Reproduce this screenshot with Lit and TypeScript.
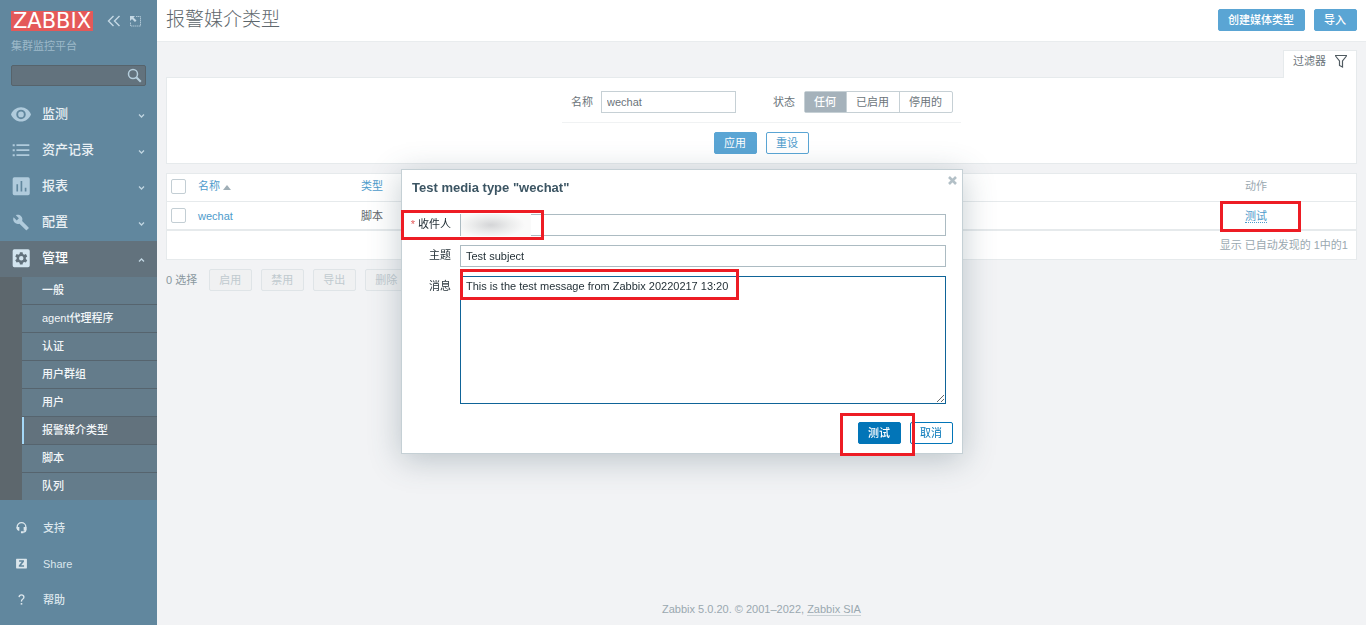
import { LitElement, html, css, svg } from "lit";
import { customElement, state } from "lit/decorators.js";
import { classMap } from "lit/directives/class-map.js";

const icons = {
  eye: svg`<path fill-rule="evenodd" d="M12 4C6.500 4 2 7.500 0 12.500 2 17.500 6.500 21 12 21s10-3.500 12-8.500C22 7.500 17.500 4 12 4zm0 14.200a5.700 5.700 0 1 1 0-11.400 5.700 5.700 0 0 1 0 11.400zm0-2.300a3.400 3.400 0 1 0 0-6.800 3.400 3.400 0 0 0 0 6.800z"/>`,
  list: svg`<path d="M2 5h2.500v2.500H2zM2 11h2.500v2.500H2zM2 17h2.500v2.500H2zM6.500 5H22v2.300H6.500zM6.500 11H22v2.300H6.500zM6.500 17H22v2.300H6.500z"/>`,
  chart: svg`<path fill-rule="evenodd" d="M4 1.500h16.500a2 2 0 0 1 2 2V21a2 2 0 0 1-2 2H4a2 2 0 0 1-2-2V3.500a2 2 0 0 1 2-2zM6.500 10v8.500h2V10zm5-4v12.500h2V6zm5 8v4.500h2V14z"/>`,
  wrench: svg`<path d="M22.700 19l-9.100-9.100c.9-2.300.4-5-1.500-6.900-2-2-5-2.400-7.400-1.300L9 6 6 9 1.600 4.700C.4 7.100.9 10.100 2.900 12.100c1.900 1.900 4.600 2.400 6.900 1.500l9.100 9.100c.4.4 1 .4 1.400 0l2.300-2.300c.5-.4.5-1.100.1-1.400z"/>`,
  gear: svg`<path fill-rule="evenodd" d="M4 1.500h16.500a2 2 0 0 1 2 2V21a2 2 0 0 1-2 2H4a2 2 0 0 1-2-2V3.500a2 2 0 0 1 2-2zm6.700 3.500-.4 2.200-1.500.9-2.100-.8-1.600 2.800 1.700 1.400v1.800l-1.700 1.400 1.600 2.800 2.100-.8 1.500.9.4 2.200h3.200l.4-2.200 1.500-.9 2.100.8 1.600-2.800-1.700-1.400v-1.800l1.700-1.400-1.600-2.800-2.100.8-1.500-.9-.4-2.200zM12.300 9.700a2.700 2.700 0 1 1 0 5.400 2.700 2.700 0 0 1 0-5.400z"/>`,
  support: svg`<path fill="none" stroke="currentColor" stroke-width="2.400" d="M4 14V11a8 8 0 0 1 16 0v5q0 4-5 4.500"/><path d="M3 11h5v7H6q-3-1-3-4zM16 11h5v5q-1 2-3 2h-2zM11 19h4.500v3.500H11z"/>`,
  share: svg`<path fill-rule="evenodd" d="M3 3h18q1 0 1 1v16q0 1-1 1H3q-1 0-1-1V4q0-1 1-1zM7.500 6v2.600h5L7 15.500V18h9.700v-2.600h-5.500L16.500 8.700V6z"/>`,
  help: svg`<path fill="none" stroke="currentColor" stroke-width="2.500" d="M7.500 7.500Q8 3.500 12 3.500T16.500 7.500Q16.500 10 14 11.500T12 16"/><path d="M10.500 18.500h3v3h-3z"/>`,
};

type IconName = keyof typeof icons;
const icon = (name: IconName, size: number) =>
  html`<svg class="icon" width=${size} height=${size} viewBox="0 0 24 24" fill="currentColor" aria-hidden="true">${icons[name]}</svg>`;

const base = css`
  *, *::before, *::after { box-sizing: border-box; }
  a { color: inherit; text-decoration: none; }
  button, input, textarea { font: inherit; margin: 0; }
  svg { display: block; flex: none; }
  .btn {
    height: 22px;
    padding: 0 10px 0 9px;
    border: 1px solid #5aa5d4;
    border-radius: 2px;
    background: #5aa5d4;
    color: #fff;
    line-height: 20px;
    white-space: nowrap;
    cursor: pointer;
  }
  .btn.alt { background: #fff; color: #4d9bcb; }
  .mark { position: absolute; border: 3px solid #ed1c24; pointer-events: none; }
`;

@customElement("side-nav")
export class SideNav extends LitElement {
  static styles = [base, css`
    :host {
      display: flex;
      flex-direction: column;
      width: 157px;
      flex: none;
      min-height: 100vh;
      background: #61879e;
      color: #e9f0f4;
    }
    .head { padding: 11px 11px 0; }
    .brand { display: flex; align-items: center; height: 20px; color: #c4d8e4; }
    .logo {
      background: #e45959;
      color: #fff;
      width: 82px;
      height: 20px;
      font: 21px/20px "DejaVu Sans", sans-serif;
      text-align: center;
    }
    .tool { padding: 0; border: 0; background: none; color: inherit; cursor: pointer; margin-left: 14px; }
    .tool + .tool { margin-left: 8px; }
    .server { margin-top: 7px; line-height: 16px; color: #9db9c9; }
    .search { display: flex; position: relative; margin-top: 11px; }
    .search input {
      width: 100%;
      height: 21px;
      border: 1px solid #56636b;
      border-radius: 2px;
      background: #62727d;
      color: #fff;
      padding: 0 24px 0 5px;
    }
    .search button {
      position: absolute;
      right: 4px;
      top: 3px;
      padding: 0;
      border: 0;
      background: none;
      color: #b5cedc;
    }
    ul { list-style: none; margin: 0; padding: 0; }
    .menu { margin-top: 11px; }
    .top {
      display: flex;
      align-items: center;
      height: 36px;
      padding: 0 11px 2px;
      font-size: 13px;
      font-weight: 500;
    }
    .top .icon { color: #b0cbdc; width: 20px; margin-right: 11px; }
    .top .label { flex: 1; line-height: 20px; }
    .top .chev { color: #c0d5e1; margin-top: 4px; }
    .top.open { background: #62727d; color: #fff; }
    .top.open .icon { color: #d3e5f0; }
    .sub { background: #5d676d; padding-left: 22px; }
    .sub a {
      display: block;
      height: 27px;
      padding-left: 20px;
      line-height: 27px;
      background: #647c8b;
      font-weight: 500;
      color: #f2f6f8;
    }
    .sub li + li { border-top: 1px solid #56646e; }
    .sub a.current { background: #62727d; border-left: 2px solid #a5d8f7; padding-left: 18px; }
    .foot { margin-top: auto; padding-bottom: 7px; }
    .foot a { display: flex; align-items: center; height: 36px; padding-left: 15px; color: #dbe6ec; font-weight: 500; }
    .foot .icon { margin: 0 15px 2px 0; }
  `];

  private sections: { name: string; icon: IconName; open?: boolean }[] = [
    { name: "监测", icon: "eye" },
    { name: "资产记录", icon: "list" },
    { name: "报表", icon: "chart" },
    { name: "配置", icon: "wrench" },
    { name: "管理", icon: "gear", open: true },
  ];
  private pages = ["一般", "agent代理程序", "认证", "用户群组", "用户", "报警媒介类型", "脚本", "队列"];
  private links: { name: string; icon: IconName }[] = [
    { name: "支持", icon: "support" },
    { name: "Share", icon: "share" },
    { name: "帮助", icon: "help" },
  ];

  private iconSize(name: IconName) {
    return name === "wrench" ? 17 : 20;
  }

  render() {
    return html`
      <div class="head">
        <div class="brand">
          <a class="logo" href="#">ZABBIX</a>
          <button class="tool" aria-label="收起侧栏">
            <svg width="14" height="14" viewBox="0 0 14 14" fill="none" stroke="currentColor" stroke-width="1.400"><path d="M6.500 2 1.500 7l5 5M12.500 2l-5 5 5 5"/></svg>
          </button>
          <button class="tool" aria-label="全屏">
            <svg width="13" height="13" viewBox="0 0 13 13" fill="none" stroke="currentColor"><path stroke-dasharray="1.500 0.500" stroke-opacity=".75" d="M7 1.500h4.500v9.500H1.500V7"/><path d="M1 1h5L4.500 2.500l3 3L6 7 3 4 1 6z" fill="currentColor" stroke="none"/></svg>
          </button>
        </div>
        <div class="server">集群监控平台</div>
        <form class="search" role="search">
          <input type="text" aria-label="搜索" />
          <button type="button" aria-label="搜索">
            <svg width="15" height="15" viewBox="0 0 15 15" fill="none" stroke="currentColor"><circle cx="6" cy="6" r="4.500" stroke-width="1.500"/><path d="m9.300 9.300 4.500 4.500" stroke-width="2"/></svg>
          </button>
        </form>
      </div>
      <nav>
        <ul class="menu">
          ${this.sections.map((s) => html`
            <li>
              <a href="#" class=${classMap({ top: true, open: !!s.open })}>
                ${icon(s.icon, this.iconSize(s.icon))}
                <span class="label">${s.name}</span>
                <svg class="chev" width="9" height="6" viewBox="0 0 9 6" fill="none" stroke="currentColor" stroke-width="1.300"><path d=${s.open ? "M2 4.500 4.500 2 7 4.500" : "M2 1.500 4.500 4 7 1.500"}/></svg>
              </a>
              ${s.open ? html`<ul class="sub">${this.pages.map((p) => html`<li><a href="#" class=${classMap({ current: p === "报警媒介类型" })}>${p}</a></li>`)}</ul>` : null}
            </li>`)}
        </ul>
      </nav>
      <ul class="foot">
        ${this.links.map((l) => html`<li><a href="#">${icon(l.icon, 13)}${l.name}</a></li>`)}
      </ul>`;
  }
}

@customElement("filter-panel")
export class FilterPanel extends LitElement {
  static styles = [base, css`
    :host { display: block; margin-top: 8px; color: #6b747a; }
    .tabs { display: flex; justify-content: flex-end; }
    .tab {
      display: flex;
      align-items: center;
      gap: 8px;
      height: 28px;
      padding: 0 8px 7px 9px;
      border: 1px solid #e6eaec;
      border-bottom: 0;
      background: #fff;
      color: #6b747a;
      margin-bottom: -1px;
      position: relative;
    }
    .panel { border: 1px solid #e6eaec; background: #fff; padding: 13px 0 9px; }
    form { width: 399px; max-width: 100%; margin: 0 auto; }
    .fields {
      display: flex;
      align-items: center;
      padding: 0 8px 9px 9px;
      border-bottom: 1px solid #f0f2f3;
      white-space: nowrap;
    }
    .fields label { line-height: 20px; }
    .name { flex: none; width: 135px; height: 22px; margin: 0 auto 0 8px; padding: 0 5px; border: 1px solid #c6d0d5; color: #6b747a; }
    .seg { display: flex; margin-left: 9px; border: 1px solid #c6d0d5; border-radius: 2px; }
    .seg input { position: absolute; opacity: 0; pointer-events: none; }
    .seg label { padding: 0 10px 0 9px; }
    .seg label + input + label { border-left: 1px solid #c6d0d5; }
    .seg input:checked + label { background: #a5b2bb; color: #fff; font-weight: 500; }
    .actions { display: flex; justify-content: center; gap: 9px; padding-top: 9px; }
  `];

  @state() private status = "任何";

  render() {
    return html`
      <div class="tabs">
        <a class="tab" href="#">过滤器
          <svg width="14" height="14" viewBox="0 0 14 14" fill="none" stroke="#4f5a60" stroke-width="1.200"><path d="M1 1.500h12M1.500 2l4 5v4.500L8.500 13V7l4-5"/></svg>
        </a>
      </div>
      <div class="panel">
        <form>
          <div class="fields">
            <label for="name">名称</label>
            <input id="name" class="name" type="text" value="wechat" />
            <span id="status">状态</span>
            <div class="seg" role="radiogroup" aria-labelledby="status">
              ${["任何", "已启用", "停用的"].map((s, i) => html`<input type="radio" name="status" id="s${i}" .checked=${this.status === s} @change=${() => (this.status = s)} /><label for="s${i}">${s}</label>`)}
            </div>
          </div>
          <div class="actions">
            <button type="button" class="btn">应用</button>
            <button type="button" class="btn alt">重设</button>
          </div>
        </form>
      </div>`;
  }
}

@customElement("media-table")
export class MediaTable extends LitElement {
  static styles = [base, css`
    :host { display: block; margin-top: 9px; }
    table { width: 100%; border-collapse: separate; border-spacing: 0; table-layout: fixed; background: #fff; border: 1px solid #e6eaec; }
    th, td { height: 28px; padding: 0 0 3px; text-align: left; font-weight: 400; line-height: 16px; color: #5e676c; }
    td { height: 27px; padding: 0; }
    th { border-bottom: 1px solid #e6eaec; color: #9aa8b0; }
    .check { width: 31px; padding-left: 4px; }
    .name { width: 163px; }
    .action { width: 111px; }
    .box {
      display: block;
      appearance: none;
      width: 15px;
      height: 15px;
      border: 1px solid #c3ced4;
      border-radius: 2px;
      background: #fff;
    }
    a { color: #4d9bcb; }
    .sort::after {
      content: "";
      display: inline-block;
      margin-left: 3px;
      border: 4px solid transparent;
      border-top: 0;
      border-bottom: 5px solid #a0afb7;
    }
    .marked { position: relative; display: inline-block; }
    .marked a { border-bottom: 1px dotted #4d9bcb; }
    .mark { left: -25px; top: -7px; width: 81px; height: 31px; }
    .total {
      height: 30px;
      padding: 0 8px;
      border: 1px solid #e6eaec;
      background: #fff;
      color: #9aa8b0;
      line-height: 28px;
      text-align: right;
    }
    .bulk { display: flex; align-items: center; gap: 9px; margin-top: 9px; color: #8a989f; }
    .bulk span { margin-right: 3px; }
    .bulk .btn { background: #f0f1f2; border-color: #dfe4e7; color: #c0cacf; }
  `];

  render() {
    return html`
      <table>
        <thead>
          <tr>
            <th class="check"><input class="box" type="checkbox" aria-label="全选" /></th>
            <th class="name"><a class="sort" href="#">名称</a></th>
            <th><a href="#">类型</a></th>
            <th class="action">动作</th>
          </tr>
        </thead>
        <tbody>
          <tr>
            <td class="check"><input class="box" type="checkbox" aria-label="wechat" /></td>
            <td><a href="#">wechat</a></td>
            <td>脚本</td>
            <td><span class="marked"><a href="#">测试</a><span class="mark"></span></span></td>
          </tr>
        </tbody>
      </table>
      <div class="total">显示 已自动发现的 1中的1</div>
      <div class="bulk">
        <span>0 选择</span>
        ${["启用", "禁用", "导出", "删除"].map((b) => html`<button class="btn" disabled>${b}</button>`)}
      </div>`;
  }
}

@customElement("test-dialog")
export class TestDialog extends LitElement {
  static styles = [base, css`
    :host {
      position: fixed;
      inset: 0;
      display: flex;
      align-items: center;
      justify-content: center;
      padding: 0 2px 2px 0;
      color: #1f2c33;
    }
    .dialog {
      position: relative;
      width: 562px;
      max-width: 100%;
      border: 1px solid #c5d0d5;
      background: #fff;
      padding: 10px 9px 9px 10px;
      box-shadow: 0 6px 30px rgba(60, 85, 100, 0.3);
    }
    h1 { margin: 0 0 18px; font-size: 13px; line-height: 16px; font-weight: 700; color: #3c5563; }
    .close { position: absolute; right: 5px; top: 6px; padding: 0; border: 0; background: none; color: #b3c0c7; }
    .grid { display: grid; grid-template-columns: 39px 1fr; gap: 9px; padding-right: 7px; }
    label { display: flex; justify-content: flex-end; gap: 3px; line-height: 20px; white-space: nowrap; }
    .req::before { content: "*"; color: #e45959; }
    .text { width: 100%; height: 22px; padding: 0 5px; border: 1px solid #acbbc2; color: inherit; background: #fff; }
    .area { display: block; height: 128px; padding: 2px 5px; line-height: 14px; border-color: #0f6498; outline: 0; resize: vertical; }
    .cell { position: relative; }
    .smear {
      position: absolute;
      left: 1px;
      top: 0;
      width: 70px;
      height: 22px;
      background: radial-gradient(ellipse 34px 13px at 30px 11px, #d4d5d7, #ebecec 55%, #fafafa);
    }
    .actions { display: flex; justify-content: flex-end; gap: 9px; margin-top: 18px; }
    .btn { background: #0275b8; border-color: #0275b8; font-weight: 500; }
    .btn.alt { color: #0275b8; font-weight: 400; }
    .to { left: -1px; top: 40px; width: 143px; height: 30px; }
    .body { left: 58px; top: 99px; width: 279px; height: 31px; }
    .run { right: 47px; bottom: -3px; width: 75px; height: 43px; }
  `];

  render() {
    return html`
      <form class="dialog" role="dialog" aria-labelledby="title">
        <h1 id="title">Test media type "wechat"</h1>
        <button type="button" class="close" aria-label="关闭">
          <svg width="9" height="9" viewBox="0 0 9 9" stroke="currentColor" stroke-width="2.600"><path d="m1 1 7 7M8 1 1 8"/></svg>
        </button>
        <div class="grid">
          <label class="req" for="to">收件人</label>
          <div class="cell"><input id="to" class="text" type="text" /><span class="smear"></span></div>
          <label for="subject">主题</label>
          <input id="subject" class="text" type="text" value="Test subject" />
          <label for="message">消息</label>
          <textarea id="message" class="text area" .value=${"This is the test message from Zabbix 20220217 13:20"}></textarea>
        </div>
        <div class="actions">
          <button type="button" class="btn">测试</button>
          <button type="button" class="btn alt">取消</button>
        </div>
        <span class="mark to"></span>
        <span class="mark body"></span>
        <span class="mark run"></span>
      </form>`;
  }
}

@customElement("app-root")
export class AppRoot extends LitElement {
  static styles = [base, css`
    :host {
      display: flex;
      min-height: 100vh;
      background: #f2f3f5;
      font: 11px/16px "Liberation Sans", "Noto Sans CJK SC", sans-serif;
    }
    main { flex: 1; min-width: 0; display: flex; flex-direction: column; }
    header {
      display: flex;
      align-items: center;
      gap: 9px;
      height: 42px;
      padding: 0 9px 2px;
      border-bottom: 1px solid #e9ecee;
      background: #fff;
    }
    h1 { flex: 1; margin: 0; font-size: 19px; line-height: 28px; font-weight: 300; color: #5e676c; }
    header .btn { font-weight: 500; }
    .content { padding: 0 9px; }
    footer { margin-top: auto; padding-bottom: 8px; text-align: center; color: #9aa8b0; }
    footer a { border-bottom: 1px solid #c9d1d5; }
  `];

  render() {
    return html`
      <side-nav></side-nav>
      <main>
        <header>
          <h1>报警媒介类型</h1>
          <button class="btn">创建媒体类型</button>
          <button class="btn">导入</button>
        </header>
        <div class="content">
          <filter-panel></filter-panel>
          <media-table></media-table>
        </div>
        <footer>Zabbix 5.0.20. © 2001–2022, <a href="#">Zabbix SIA</a></footer>
      </main>
      <test-dialog></test-dialog>`;
  }
}
